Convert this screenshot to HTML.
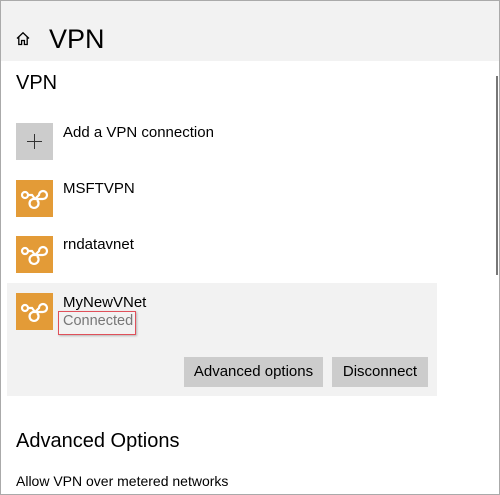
<!DOCTYPE html>
<html><head><style>
body{margin:0;width:500px;height:495px;overflow:hidden;font-family:"Liberation Sans",sans-serif;color:#000;background:#fff}
.frame{position:absolute;left:0;top:0;width:498px;height:493px;border:1px solid #aaa;overflow:hidden}
.hdr{position:absolute;left:0;top:0;width:498px;height:60px;background:#f2f2f2}
.t{position:absolute;white-space:nowrap}
.ic{position:absolute;left:15px;width:37px;height:37px;background:#e39b37}
.ic svg{position:absolute;left:0;top:0}
.btn{position:absolute;top:356px;height:30px;background:#cccccc;font-size:15px;line-height:30px;text-align:center}
</style></head><body><div class="frame">
<div class="hdr"></div>
<svg class="t" style="left:15px;top:30px" width="14" height="15" viewBox="0 0 14 15"><path d="M1 7.5 L7 1.8 L13 7.5 M2.8 6 V13.5 H5.6 V9.5 H8.4 V13.5 H11.2 V6" fill="none" stroke="#000" stroke-width="1.3"/></svg>
<div class="t" style="left:48px;top:23px;font-size:27px">VPN</div>
<div class="t" style="left:15px;top:71px;font-size:20px">VPN</div>
<div class="t" style="left:15px;top:122px;width:37px;height:37px;background:#ccc"></div>
<div class="t" style="left:26px;top:140px;width:15px;height:1px;background:#333"></div>
<div class="t" style="left:33px;top:133px;width:1px;height:15px;background:#333"></div>
<div class="t" style="left:62px;top:123px;font-size:15px">Add a VPN connection</div>

<div class="ic" style="top:179px"><svg width="37" height="37" viewBox="0 0 37 37"><g fill="none" stroke="#fff" stroke-width="2.2"><circle cx="9" cy="15" r="3"/><path d="M12 15 L16 15 L19 19"/><path d="M19 19 L23 15 A4 4 0 1 1 27 19 L19 19 A4.5 4.5 0 1 0 21 20"/></g></svg></div>
<div class="t" style="left:62px;top:179px;font-size:15px">MSFTVPN</div>
<div class="ic" style="top:235px"><svg width="37" height="37" viewBox="0 0 37 37"><g fill="none" stroke="#fff" stroke-width="2.2"><circle cx="9" cy="15" r="3"/><path d="M12 15 L16 15 L19 19"/><path d="M19 19 L23 15 A4 4 0 1 1 27 19 L19 19 A4.5 4.5 0 1 0 21 20"/></g></svg></div>
<div class="t" style="left:62px;top:235px;font-size:15px">rndatavnet</div>

<div class="t" style="left:6px;top:282px;width:430px;height:113px;background:#f2f2f2"></div>
<div class="ic" style="top:292px"><svg width="37" height="37" viewBox="0 0 37 37"><g fill="none" stroke="#fff" stroke-width="2.2"><circle cx="9" cy="15" r="3"/><path d="M12 15 L16 15 L19 19"/><path d="M19 19 L23 15 A4 4 0 1 1 27 19 L19 19 A4.5 4.5 0 1 0 21 20"/></g></svg></div>
<div class="t" style="left:62px;top:293px;font-size:15px">MyNewVNet</div>
<div class="t" style="left:62px;top:312px;font-size:14.5px;color:#777">Connected</div>
<div class="t" style="left:57px;top:310px;width:76px;height:22px;border:1.5px solid #e0505a;box-shadow:1px 1px 2px rgba(0,0,0,.25)"></div>
<div class="btn" style="left:183px;width:139px">Advanced options</div>
<div class="btn" style="left:331px;width:96px">Disconnect</div>

<div class="t" style="left:15px;top:429px;font-size:20px">Advanced Options</div>
<div class="t" style="left:15px;top:472px;font-size:14px">Allow VPN over metered networks</div>
<div class="t" style="left:495px;top:75px;width:2px;height:199px;background:#777"></div>
</div></body></html>
